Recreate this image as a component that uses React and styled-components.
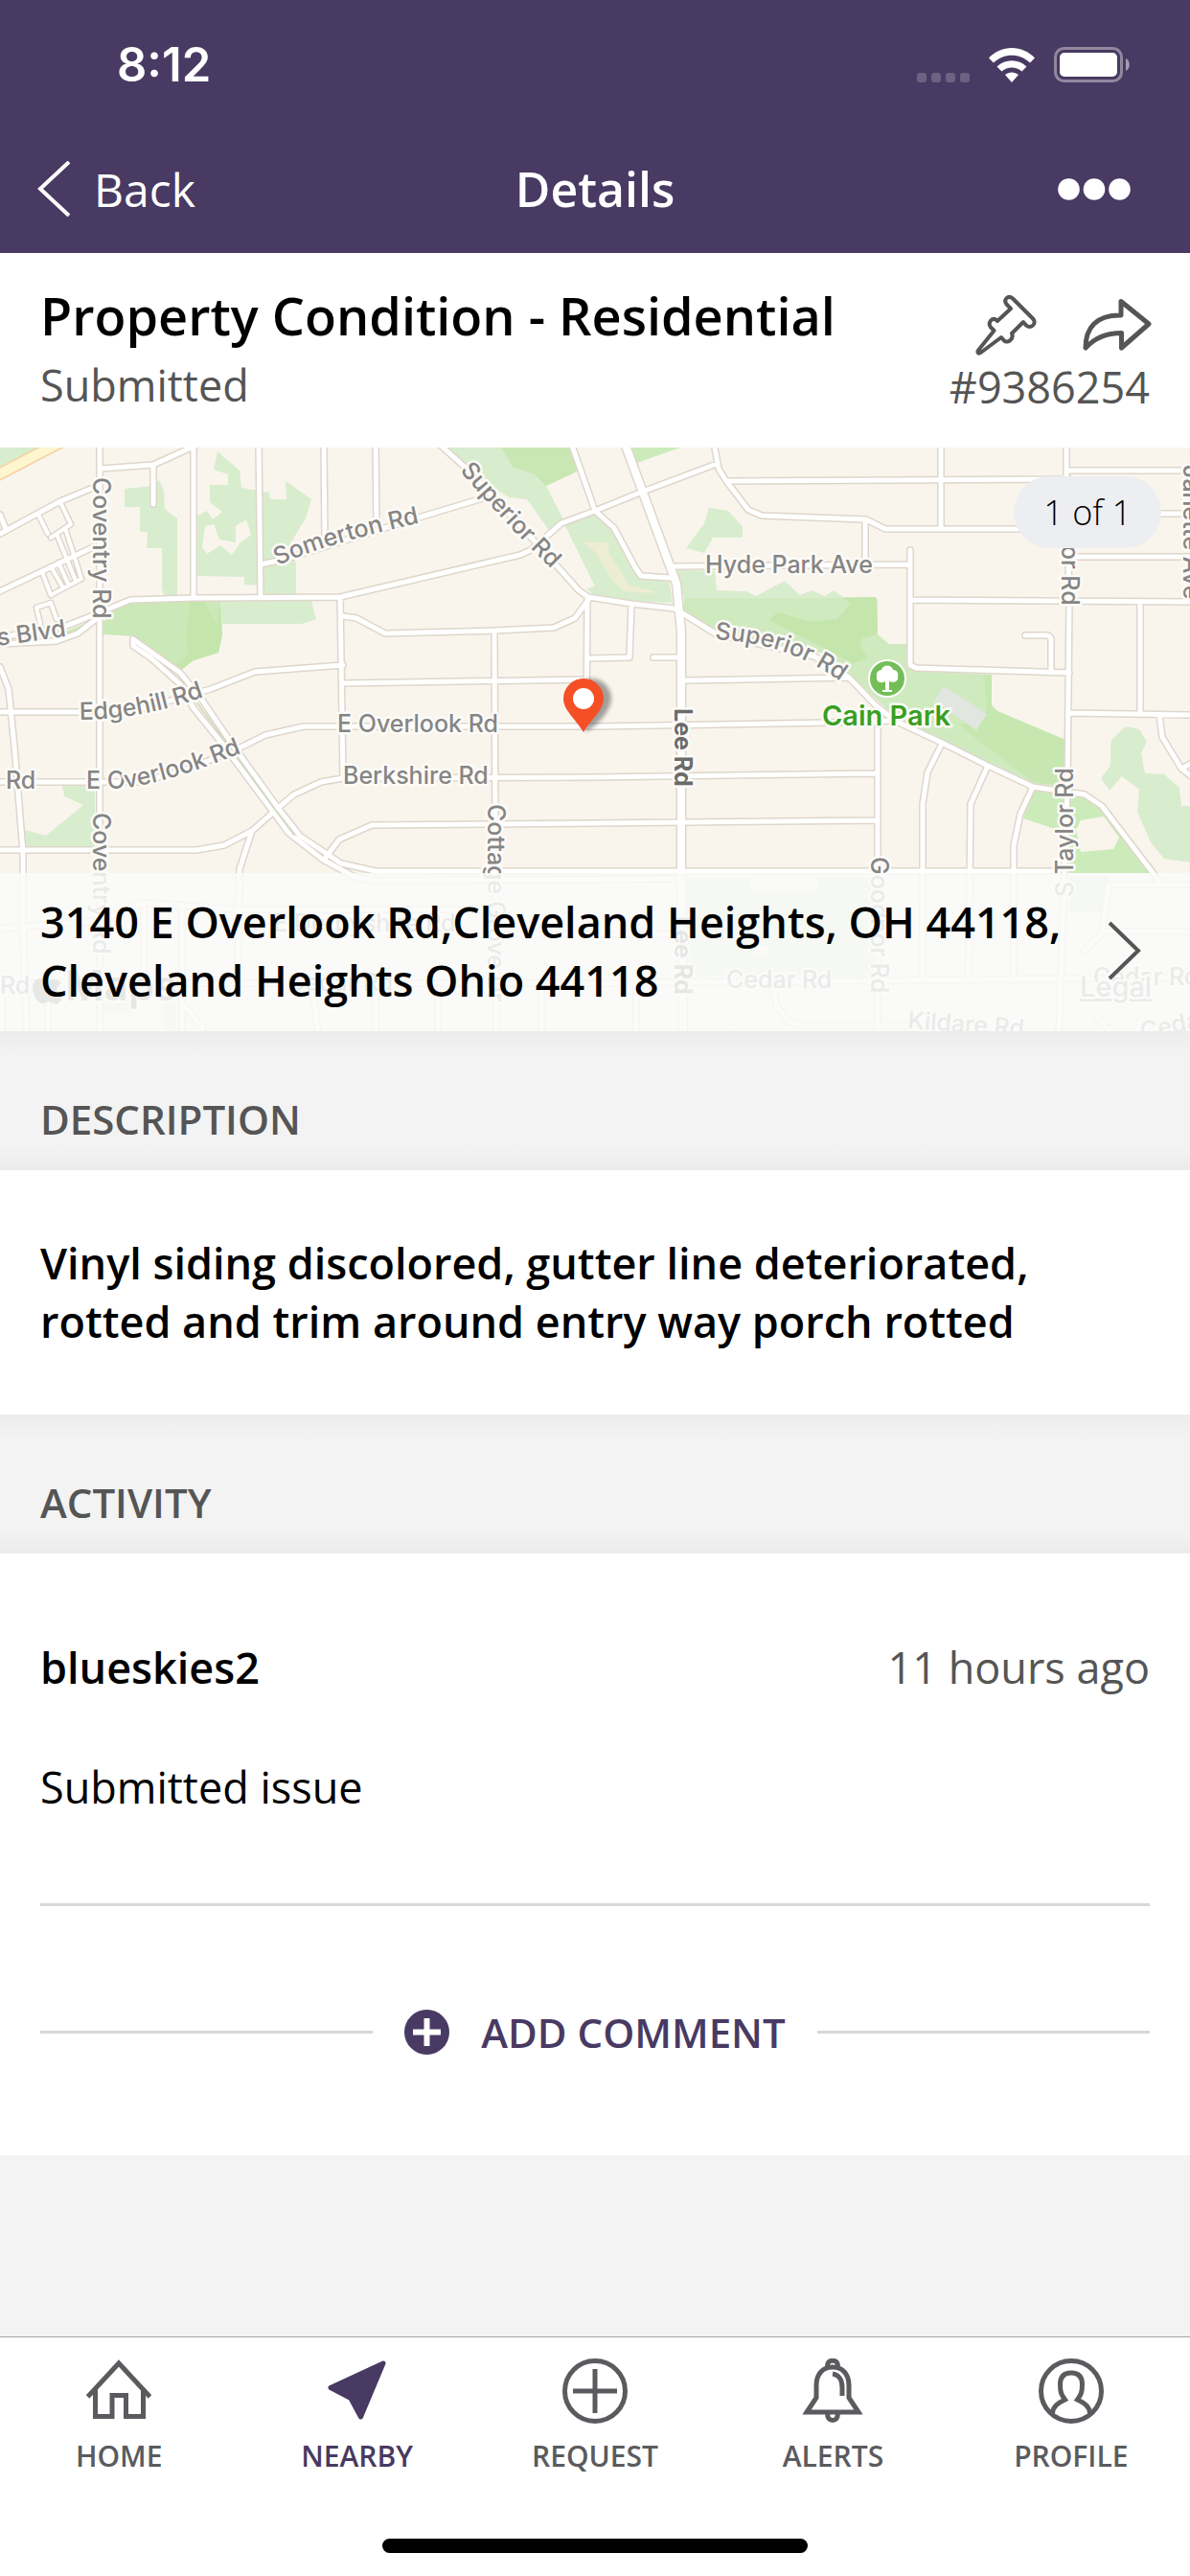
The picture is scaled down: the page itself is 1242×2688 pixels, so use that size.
import styled, { createGlobalStyle } from 'styled-components';

const colors = {
   purple: '#483a62',
   grey: '#555555',
   icon: '#5a5b5e',
   line: '#d8d8d8',
   page: '#f3f3f3',
};

const greens = [
   { fill: '#d8edcd', d: 'M0 0H40L0 20Z' },
   { fill: '#d8edcd', d: 'M130 43L160 40L166 34L171 45L172 64L185 74V154H171L169 147V105H153L154 89L146 87V62H130Z' },
   {
      fill: '#d8edcd',
      d: 'M227 4L250 24L252 42L281 47L282 54H299L298 35L325 54L319 74L303 100L309 122V154H273V144L255 143V135L205 134V72L216 66L222 75L232 67L219 57V39H238V28L223 23ZM214 82L211 104L216 111L230 102L242 112L251 99L262 91L257 75L246 82V99L229 96L223 80Z',
   },
   { fill: '#cbe8b8', d: 'M115 172L136 161L230 160L232 195L228 214L202 222L188 233L139 197L108 195V182ZM66 193L97 180V186L75 196Z' },
   { fill: '#c4e6ac', d: 'M198 161H212L226 185L230 160L232 195L228 214L202 222L188 233L182 228L198 214L194 203Z' },
   { fill: '#d8edcd', d: 'M230 160H325L330 179L315 184H232Z' },
   {
      fill: '#d8edcd',
      d: 'M467 0H596L602 25L570 40L590 79L621 70L641 84L663 125L669 134L698 137L702 162L659 160L621 155L612 147L621 145L590 82L572 85L550 54L531 52L515 42Z',
   },
   { fill: '#c8e7b3', d: 'M523 0H596L602 25L570 40L558 28L535 20Z' },
   { fill: '#ecedd2', d: 'M608 99H635V109L657 144L684 150L680 152L651 150L639 139L621 109Z' },
   { fill: '#cbebbb', d: 'M659 0H710L665 16Z' },
   { fill: '#d8edcd', d: 'M740 63L760 66L775 82V94H744L735 110L716 105L735 79Z' },
   { fill: '#d8edcd', d: 'M704 127L746 129L748 149L779 150L789 155L819 139L835 154L847 149L861 155L870 149L880 156L714 157Z' },
   {
      fill: '#d0eac0',
      d: 'M714 157L914 156L916 159V195L928 205H947L950 229L956 233L1035 237V269L1041 275L1112 305V355L1078 350L1031 328L985 305L934 281L886 236L860 215L748 192L714 172Z',
   },
   { fill: '#c4e6ac', d: 'M880 157L914 156L916 195L900 199L898 209L906 220L890 225L803 180L811 172L847 182L874 179L888 162Z' },
   { fill: '#c6e7b0', d: 'M1027 237H1035V269L1041 275L1112 305V352L1080 350L1020 305L1002 290L1030 275Z' },
   { fill: '#e2e6e1', d: 'M985 249L1030 278L1019 295L975 264Z' },
   {
      fill: '#cbebbb',
      d: 'M1078 357L1132 365L1150 375L1199 444H1116V412L1106 400L1092 395L1068 387ZM1128 389L1123 399L1128 422L1162 419L1168 407L1152 385Z',
   },
   {
      fill: '#d8edcd',
      d: 'M1159 312L1160 305L1175 291L1189 294L1197 307L1191 319L1195 340L1215 341L1231 355L1233 374H1242V433L1215 429L1201 412L1187 380L1189 357L1171 343L1158 358L1149 345L1159 332Z',
   },
   { fill: '#d8edcd', d: 'M65 353H99V417H26V399L48 405L87 373L67 364Z' },
   { fill: '#d8edcd', d: 'M716 449H783V464H853V448H916V552H716ZM801 520V531H783V520ZM1116 447H1157L1150 485H1116ZM108 575H138V590H108ZM172 575H184V609H172Z' },
];

const roads = [
   'M104 -5V615',
   'M105 22L160 18L204 -2',
   'M160 18V59',
   'M202 -5V157',
   'M270 -5L272 157',
   'M338 -5L339 97',
   'M392 -5L393 80',
   'M0 205L59 202L81 194L99 180L104 172',
   'M0 198L67 187L97 175L136 159L202 157L355 156L543 112L554 107L586 79L621 66L668 47L748 17',
   'M272 122L295 117L447 70L507 52',
   'M459 -3L487 22L562 102L604 149L614 156L659 163L704 168L714 174L748 195L850 218L886 240L914 269L934 285L985 309L1031 332L1078 354L1132 362L1150 374L1211 454',
   'M596 -5L621 66L641 84L663 125L669 134L700 136',
   'M745 -5L750 22L758 35L781 65L795 71L904 75L924 85H1113',
   'M758 35L1116 33',
   'M982 -5V85',
   'M903 75V120',
   'M1113 -5V30L1116 159L1114 355L1105 615',
   'M1113 24H1250',
   'M1200 69H1250',
   'M1116 114H1250',
   'M702 124L950 122',
   'M950 107V227L956 230L1116 235',
   'M950 159L1250 161',
   'M1190 161V277',
   'M1116 277L1250 279',
   'M1070 196H1094L1097 199V235',
   'M1210 279L1213 302L1233 335L1250 348M1233 335L1250 326',
   'M614 220L657 219L659 163',
   'M613 156L612 290',
   'M682 219H711',
   'M715 243L886 240',
   'M253 312L277 300L317 291H621L867 287L934 285',
   'M358 246L612 242',
   'M355 156L358 344',
   'M358 176L372 178L402 194L515 191L578 188L600 178L614 159',
   'M516 191L518 615',
   'M0 276H83L150 272L220 252L266 234L358 227',
   'M0 229L9 252L15 312L24 422V502L28 615',
   'M0 420H205L234 415L263 400L289 377L307 362L335 349L358 345L621 344L914 340',
   'M263 400L250 440L248 560',
   'M339 429L354 409L388 394L621 392L916 389',
   'M0 349H147L198 335L253 312',
   'M916 285V615',
   'M983 309L968 339L963 372V552',
   'M1031 332L1013 372L1011 552',
   'M1078 354L1065 382L1058 415V552',
   'M0 90L63 56L97 42',
   'M0 150L97 104',
   'M0 70L6 85',
   'M0 502L104 494L150 475L248 482H518',
   'M0 559H621L1250 553',
   'M518 508H711',
   'M150 475V559M190 480V559M2 559V615M50 559V615M190 559V615',
   'M190 580L212 606M325 559L333 615M392 559V615M457 559V615M565 559V615M664 559V615',
   'M808 564L810 582L822 598L835 603H945',
   'M1250 456H1157L1150 507L1132 525M1250 505H1155M1145 595L1165 615',
];

const lots = [
   'M63 57L74 80L53 94M40 70L50 90',
   'M59 90L79 139M69 87L85 137L53 154L44 130',
   'M53 124L65 145M61 120L71 142',
   'M42 184L38 167L53 162L59 179',
];

const boulevard = [
   'M139 200L188 235L210 262L242 309L291 377L313 405L356 434L392 442L1105 442',
   'M139 200V207L158 220L188 247L202 272L232 309L285 380L301 402L337 430L368 447L388 452L711 450',
];

const paths = {
   somerton: 'M290 123Q350 96 470 72',
   superiorWest: 'M480 24Q530 84 600 150',
   superiorEast: 'M746 200C800 204 845 215 900 262',
   edgehill: 'M83 284Q160 284 240 249',
   overlook: 'M90 356H125Q180 350 275 309',
};

const curved = [
   { path: 'somerton', text: 'Somerton Rd' },
   { path: 'superiorWest', text: 'Superior Rd' },
   { path: 'superiorEast', text: 'Superior Rd' },
   { path: 'edgehill', text: 'Edgehill Rd' },
   { path: 'overlook', text: 'E Overlook Rd' },
];

const labels = [
   { text: 'Hyde Park Ave', x: 736, y: 131 },
   { text: 'E Overlook Rd', x: 352, y: 297 },
   { text: 'Berkshire Rd', x: 358, y: 351 },
   { text: 'Rd', x: 6, y: 356 },
   { text: 's Blvd', x: -2, y: 207, turn: -8 },
   { text: 'Coventry Rd', x: 97, y: 31, turn: 90 },
   { text: 'Coventry Rd', x: 97, y: 381, turn: 90 },
   { text: 'Cottage Grove Dr', x: 509, y: 372, turn: 90 },
   { text: 'Goodnor Rd', x: 909, y: 427, turn: 90 },
   { text: 'S Taylor Rd', x: 1108, y: 30, turn: 90 },
   { text: 'S Taylor Rd', x: 1120, y: 469, turn: -90 },
   { text: 'Janette Ave', x: 1235, y: 18, turn: 90 },
   { text: 'Cedar Rd', x: 758, y: 564 },
   { text: 'Cedar Rd', x: 1141, y: 561 },
   { text: 'Kildare Rd', x: 947, y: 606, turn: 4 },
   { text: 'Cedar', x: 1192, y: 618, turn: -12 },
   { text: 'E Derbyshire Rd', x: 285, y: 505 },
   { text: 'Rd', x: 0, y: 570 },
   { text: 'Cedar Rd', x: 300, y: 567 },
];

const AreaMap = () => (
   <MapDrawing
      viewBox='0 0 1242 609'
      preserveAspectRatio='xMidYMid slice'
      role='img'
      aria-label='Map of the reported location'
   >
      <defs>
         {Object.entries(paths).map(([id, d]) => (
            <path key={id} id={id} d={d} />
         ))}
         <filter id='pinShadow' x='-50%' y='-50%' width='200%' height='200%'>
            <feGaussianBlur stdDeviation='2' />
         </filter>
      </defs>
      <rect width='1242' height='609' fill='#f9f5ed' />
      {greens.map(({ fill, d }) => (
         <path key={d} d={d} fill={fill} fillRule='evenodd' />
      ))}
      <g fill='none' strokeLinejoin='round' strokeLinecap='round'>
         <g stroke='#dfd6cb'>
            <path d={lots.join('')} strokeWidth='7' />
            <path d={roads.join('')} strokeWidth='8' />
            <path d={boulevard.join('')} strokeWidth='8' />
            <path d='M650 -10L706 142L709 172L711 192V442L713 615' strokeWidth='11' />
         </g>
         <path d='M-5 30L62 -5' stroke='#f6cf9f' strokeWidth='13' />
         <path d='M-5 30L62 -5' stroke='#fdf6d0' strokeWidth='10' />
         <g stroke='#ffffff'>
            <path d={lots.join('')} strokeWidth='4' />
            <path d={roads.join('')} strokeWidth='5' />
            <path d={boulevard.join('')} strokeWidth='5' />
            <path d='M650 -10L706 142L709 172L711 192V442L713 615' strokeWidth='8' />
         </g>
         <path d='M206 267L237 309L288 379L307 404' stroke='#d3dcc2' strokeWidth='2' />
      </g>
      <MapText>
         {labels.map(({ text, x, y, turn = 0 }) => (
            <text key={`${text}${x}${y}`} transform={`translate(${x} ${y}) rotate(${turn})`}>
               {text}
            </text>
         ))}
         {curved.map(({ path, text }) => (
            <text key={path}>
               <textPath href={`#${path}`}>{text}</textPath>
            </text>
         ))}
         <text className='main' transform='translate(704 272) rotate(90)'>
            Lee Rd
         </text>
         <text className='main' transform='translate(704 489) rotate(90)'>
            Lee Rd
         </text>
         <text className='park' x='925' y='290'>
            Cain Park
         </text>
         <text className='legal' x='1127' y='573'>
            Legal
         </text>
         <text className='maps' x='68' y='577'>
            Maps
         </text>
      </MapText>
      <path
         d='M55 545C54 550 51 553 47 553C47 549 51 545 55 545ZM56 555C60 555 62 557 64 559C57 563 58 571 65 574C62 580 60 582 56 580C52 578 50 578 46 580C36 582 27 555 42 554C46 554 48 558 56 555Z'
         fill='#707070'
      />
      <circle cx='926' cy='241' r='20' fill='#ffffff' />
      <circle cx='926' cy='241' r='18' fill='#73be57' />
      <path
         d='M924 253V244C919 247 914 244 915 239C914 235 917 232 920 232C921 226 931 226 932 232C936 232 938 235 937 239C938 244 933 246 928 244V253H931V255H921V253Z'
         fill='#ffffff'
      />
      <path
         d='M612 296C600 282 596 272 596 262A21 21 0 0 1 638 262C638 274 622 292 612 296Z'
         fill='#000000'
         opacity='0.35'
         filter='url(#pinShadow)'
      />
      <path d='M609 297C600 282 588 274 588 262A21 21 0 0 1 630 262C630 274 618 282 609 297Z' fill='#f44f25' />
      <circle cx='609' cy='262' r='11' fill='#ffffff' />
   </MapDrawing>
);

const tabs = [
   {
      label: 'Home',
      icon: (
         <>
            <path d='M1.500 40L34 5L66.500 40' />
            <path d='M9.500 31V60.500H27V38.500H41.500V60.500H59.500V31' />
         </>
      ),
   },
   {
      label: 'Nearby',
      active: true,
      icon: <path d='M61 5L6 30.500L27 41.500L37.500 61Z' fill='currentColor' strokeLinejoin='round' />,
   },
   {
      label: 'Request',
      icon: (
         <>
            <circle cx='34' cy='34' r='31.500' />
            <path d='M34 11V57M11 34H57' />
         </>
      ),
   },
   {
      label: 'Alerts',
      icon: (
         <>
            <path d='M29 9C26 0 42 0 39 9' />
            <path d='M7 56L17 41V28C17 16 24 9 34 9C44 9 51 16 51 28V41L61 56Z' />
            <path d='M34 16C41 17 44 23 44 30V39' />
            <path d='M29 57C27 67 41 67 39 57' />
         </>
      ),
   },
   {
      label: 'Profile',
      icon: (
         <>
            <circle cx='34' cy='34' r='31.500' />
            <path d='M14.500 57C15 50 20 46.500 27.500 43C24 38 22.500 36 22.500 27C22.500 19 26.500 15 34 15C41.500 15 45.500 19 45.500 27C45.500 36 44 38 40.500 43C48 46.500 53 50 53.500 57' />
         </>
      ),
   },
];

const App = () => {
   return (
      <Screen>
         <GlobalStyle />
         <Header>
            <StatusBar>
               <Clock>8:12</Clock>
               <StatusIcons>
                  <svg width='55' height='10' viewBox='0 0 55 10' fill='#ffffff' opacity='0.2'>
                     <rect width='10' height='10' rx='3' />
                     <rect x='15' width='10' height='10' rx='3' />
                     <rect x='30' width='10' height='10' rx='3' />
                     <rect x='45' width='10' height='10' rx='3' />
                  </svg>
                  <svg width='48' height='36' viewBox='0 0 48 36' fill='#ffffff'>
                     <path d='M0 10.500C13 -3.500 35 -3.500 48 10.500L43 15.500C32.500 5 15.500 5 5 15.500Z' />
                     <path d='M8.500 19.500C17 11 31 11 39.500 19.500L34.500 24.500C28.500 19 19.500 19 13.500 24.500Z' />
                     <path d='M17 28C21 24.500 27 24.500 31 28L24 36Z' />
                  </svg>
                  <svg width='80' height='37' viewBox='0 0 80 37' fill='#ffffff'>
                     <rect x='1.500' y='1.500' width='69' height='34' rx='9' fill='none' stroke='#ffffff' strokeWidth='3' opacity='0.4' />
                     <rect x='6' y='6' width='60' height='25' rx='5' />
                     <path d='M75 12C80 14 80 23 75 25Z' opacity='0.5' />
                  </svg>
               </StatusIcons>
            </StatusBar>
            <NavBar>
               <BackButton type='button'>
                  <svg width='36' height='58' viewBox='0 0 36 58' fill='none' stroke='currentColor' strokeWidth='4'>
                     <path d='M34 1L4 29L34 57' />
                  </svg>
                  Back
               </BackButton>
               <NavTitle>Details</NavTitle>
               <MoreButton type='button' aria-label='More'>
                  <svg width='76' height='23' viewBox='0 0 76 23' fill='currentColor'>
                     <circle cx='11.500' cy='11.500' r='11.300' />
                     <circle cx='38' cy='11.500' r='11.300' />
                     <circle cx='64.500' cy='11.500' r='11.300' />
                  </svg>
               </MoreButton>
            </NavBar>
         </Header>

         <Content>
            <Summary>
               <div className='issue'>
                  <h1>Property Condition - Residential</h1>
                  <p>Submitted</p>
               </div>
               <div className='aside'>
                  <div className='actions'>
                     <ActionButton type='button' aria-label='Pin'>
                        <svg width='64' height='64' viewBox='-1 -1 64 64' strokeWidth='4' strokeLinejoin='round'>
                           <path d='M36 14L31.500 9.500C28 4.500 33 -0.500 38 3.500L59.500 25C63 30 57 35.500 52 31.500L49 28L37 40C39.500 45 33 51 29 47.500L26 44L4.500 60C2.500 61.500 0.500 60 2 57.500L18.500 37L15 33.500C11.500 29 16 23 20.500 25.500L22 27Z' />
                        </svg>
                     </ActionButton>
                     <ActionButton type='button' aria-label='Share'>
                        <svg width='74' height='54' viewBox='0 0 74 54' strokeWidth='5' strokeLinejoin='round'>
                           <path d='M40 17V2.500L69 26L40.500 51V35.500C26 35.500 14 39 3 51C3 30 14 16.500 40 17Z' />
                        </svg>
                     </ActionButton>
                  </div>
                  <p>#9386254</p>
               </div>
            </Summary>

            <Location>
               <AreaMap />
               <Counter>1 of 1</Counter>
               <Address href='#map'>
                  <span>
                     3140 E Overlook Rd,Cleveland Heights, OH 44118, Cleveland Heights Ohio 44118
                  </span>
                  <svg width='36' height='62' viewBox='0 0 36 62' fill='none' stroke={colors.grey} strokeWidth='4'>
                     <path d='M2 2L32 31L2 60' />
                  </svg>
               </Address>
            </Location>

            <SectionTitle>Description</SectionTitle>
            <Description>
               Vinyl siding discolored, gutter line deteriorated, rotted and trim around entry way
               porch rotted
            </Description>

            <SectionTitle>Activity</SectionTitle>
            <Activity>
               <div className='entry'>
                  <strong>blueskies2</strong>
                  <time>11 hours ago</time>
               </div>
               <p>Submitted issue</p>
               <AddComment type='button'>
                  <svg width='47' height='47' viewBox='0 0 47 47'>
                     <circle cx='23.500' cy='23.500' r='23.500' fill='currentColor' />
                     <path d='M23.500 9V38M9 23.500H38' stroke='#ffffff' strokeWidth='6' />
                  </svg>
                  <span>Add comment</span>
               </AddComment>
            </Activity>
         </Content>

         <TabBar>
            <ul>
               {tabs.map(({ label, icon, active }) => (
                  <li key={label}>
                     <Tab href={`#${label.toLowerCase()}`} $active={active}>
                        <svg width='68' height='68' viewBox='0 0 68 68' fill='none' stroke='currentColor' strokeWidth='5'>
                           {icon}
                        </svg>
                        {label}
                     </Tab>
                  </li>
               ))}
            </ul>
            <HomeIndicator />
         </TabBar>
      </Screen>
   );
};

export default App;

const GlobalStyle = createGlobalStyle`
   * {
      box-sizing: border-box;
      margin: 0;
      padding: 0;
   }

   body {
      font-family: 'Open Sans', 'Noto Sans', sans-serif;
      font-size: 45px;
      line-height: 61px;
      color: #000000;
      background: ${colors.page};
   }

   button {
      font: inherit;
      color: inherit;
      background: none;
      border: none;
   }

   a {
      color: inherit;
      text-decoration: none;
   }

   svg {
      display: block;
      flex-shrink: 0;
   }
`;

const Screen = styled.div`
   display: flex;
   flex-direction: column;
   min-height: 100vh;
`;

const Header = styled.header`
   color: #ffffff;
   background: ${colors.purple};
`;

const StatusBar = styled.div`
   display: flex;
   align-items: center;
   justify-content: space-between;
   height: 134px;
   padding: 0 62px 0 122px;
`;

const Clock = styled.time`
   font-family: Inter, sans-serif;
   font-size: 49px;
   font-weight: 600;
`;

const StatusIcons = styled.div`
   display: flex;
   align-items: flex-end;
   gap: 20px;
`;

const NavBar = styled.nav`
   display: grid;
   grid-template-columns: 1fr auto 1fr;
   align-items: center;
   height: 130px;
   padding: 0 38px 4px;
   font-size: 50px;
`;

const BackButton = styled.button`
   display: flex;
   align-items: center;
   gap: 24px;
   justify-self: start;
   font-size: 48px;
`;

const NavTitle = styled.div`
   font-weight: 600;
`;

const MoreButton = styled.button`
   justify-self: end;
   padding-right: 24px;
`;

const Content = styled.main`
   flex: 1;
`;

const Summary = styled.section`
   display: flex;
   justify-content: space-between;
   padding: 29px 42px 33px;
   color: ${colors.grey};
   background: #ffffff;

   h1 {
      margin-bottom: 5px;
      font-size: 54px;
      font-weight: 600;
      line-height: 73px;
      color: #000000;
   }

   .aside {
      padding-top: 14px;
      text-align: right;
   }

   .actions {
      display: flex;
      align-items: center;
      justify-content: flex-end;
      gap: 48px;
      margin: 0 -4px 2px 0;
   }
`;

const ActionButton = styled.button`
   svg {
      fill: none;
      stroke: currentColor;
   }
`;

const Location = styled.section`
   position: relative;
   aspect-ratio: 1242 / 609;
   overflow: hidden;
`;

const MapDrawing = styled.svg`
   width: 100%;
   height: 100%;
`;

const MapText = styled.g`
   font-family: Inter, sans-serif;
   font-size: 25px;
   font-weight: 500;
   fill: #858585;
   stroke: #fdfbf7;
   stroke-width: 5px;
   stroke-linejoin: round;
   paint-order: stroke;

   .main {
      font-weight: 700;
      fill: #6b6b6b;
   }

   .park {
      font-size: 29px;
      font-weight: 600;
      text-anchor: middle;
      fill: #38a01f;
   }

   .legal {
      font-size: 29px;
      text-decoration: underline;
      text-decoration-thickness: 3px;
   }

   .maps {
      font-size: 44px;
      font-weight: 600;
      fill: #707070;
   }
`;

const Counter = styled.div`
   position: absolute;
   top: 30px;
   right: 30px;
   padding: 0 31px;
   border-radius: 38px;
   font-size: 36px;
   font-weight: 300;
   line-height: 75px;
   background: #edeef2;
`;

const Address = styled.a`
   position: absolute;
   right: 0;
   bottom: 0;
   left: 0;
   display: flex;
   align-items: center;
   justify-content: space-between;
   padding: 20px 50px 23px 42px;
   font-weight: 600;
   background: rgba(250, 250, 249, 0.86);
`;

const SectionTitle = styled.h2`
   padding: 63px 42px 25px;
   font-size: 42px;
   font-weight: 600;
   line-height: 57px;
   text-transform: uppercase;
   color: ${colors.grey};
   background: linear-gradient(#ececec, ${colors.page} 24px, ${colors.page} calc(100% - 24px), #ebebeb);
`;

const Description = styled.p`
   padding: 66px 42px 67px;
   font-weight: 600;
   background: #ffffff;
`;

const Activity = styled.section`
   padding: 88px 42px 105px;
   background: #ffffff;

   .entry {
      display: flex;
      justify-content: space-between;
      margin-bottom: 64px;
   }

   strong {
      font-weight: 600;
   }

   time {
      color: ${colors.grey};
   }

   p {
      padding-bottom: 91px;
      border-bottom: 3px solid ${colors.line};
   }
`;

const AddComment = styled.button`
   display: flex;
   align-items: center;
   gap: 33px;
   width: 100%;
   height: 47px;
   margin-top: 108px;
   font-size: 42px;
   font-weight: 600;
   text-transform: uppercase;
   color: ${colors.purple};

   &::before,
   &::after {
      content: '';
      flex: 1;
      height: 3px;
      background: ${colors.line};
   }
`;

const TabBar = styled.nav`
   padding: 22px 0 24px;
   border-top: 1px solid #a5a5a5;
   background: #ffffff;

   ul {
      display: flex;
      margin-bottom: 66px;
      list-style: none;
   }

   li {
      flex: 1;
   }
`;

const Tab = styled.a`
   display: flex;
   flex-direction: column;
   align-items: center;
   gap: 13px;
   font-size: 30px;
   font-weight: 600;
   line-height: 41px;
   text-transform: uppercase;
   color: ${({ $active }) => ($active ? colors.purple : colors.icon)};
`;

const HomeIndicator = styled.div`
   width: 444px;
   height: 15px;
   margin: 0 auto;
   border-radius: 8px;
   background: #000000;
`;
